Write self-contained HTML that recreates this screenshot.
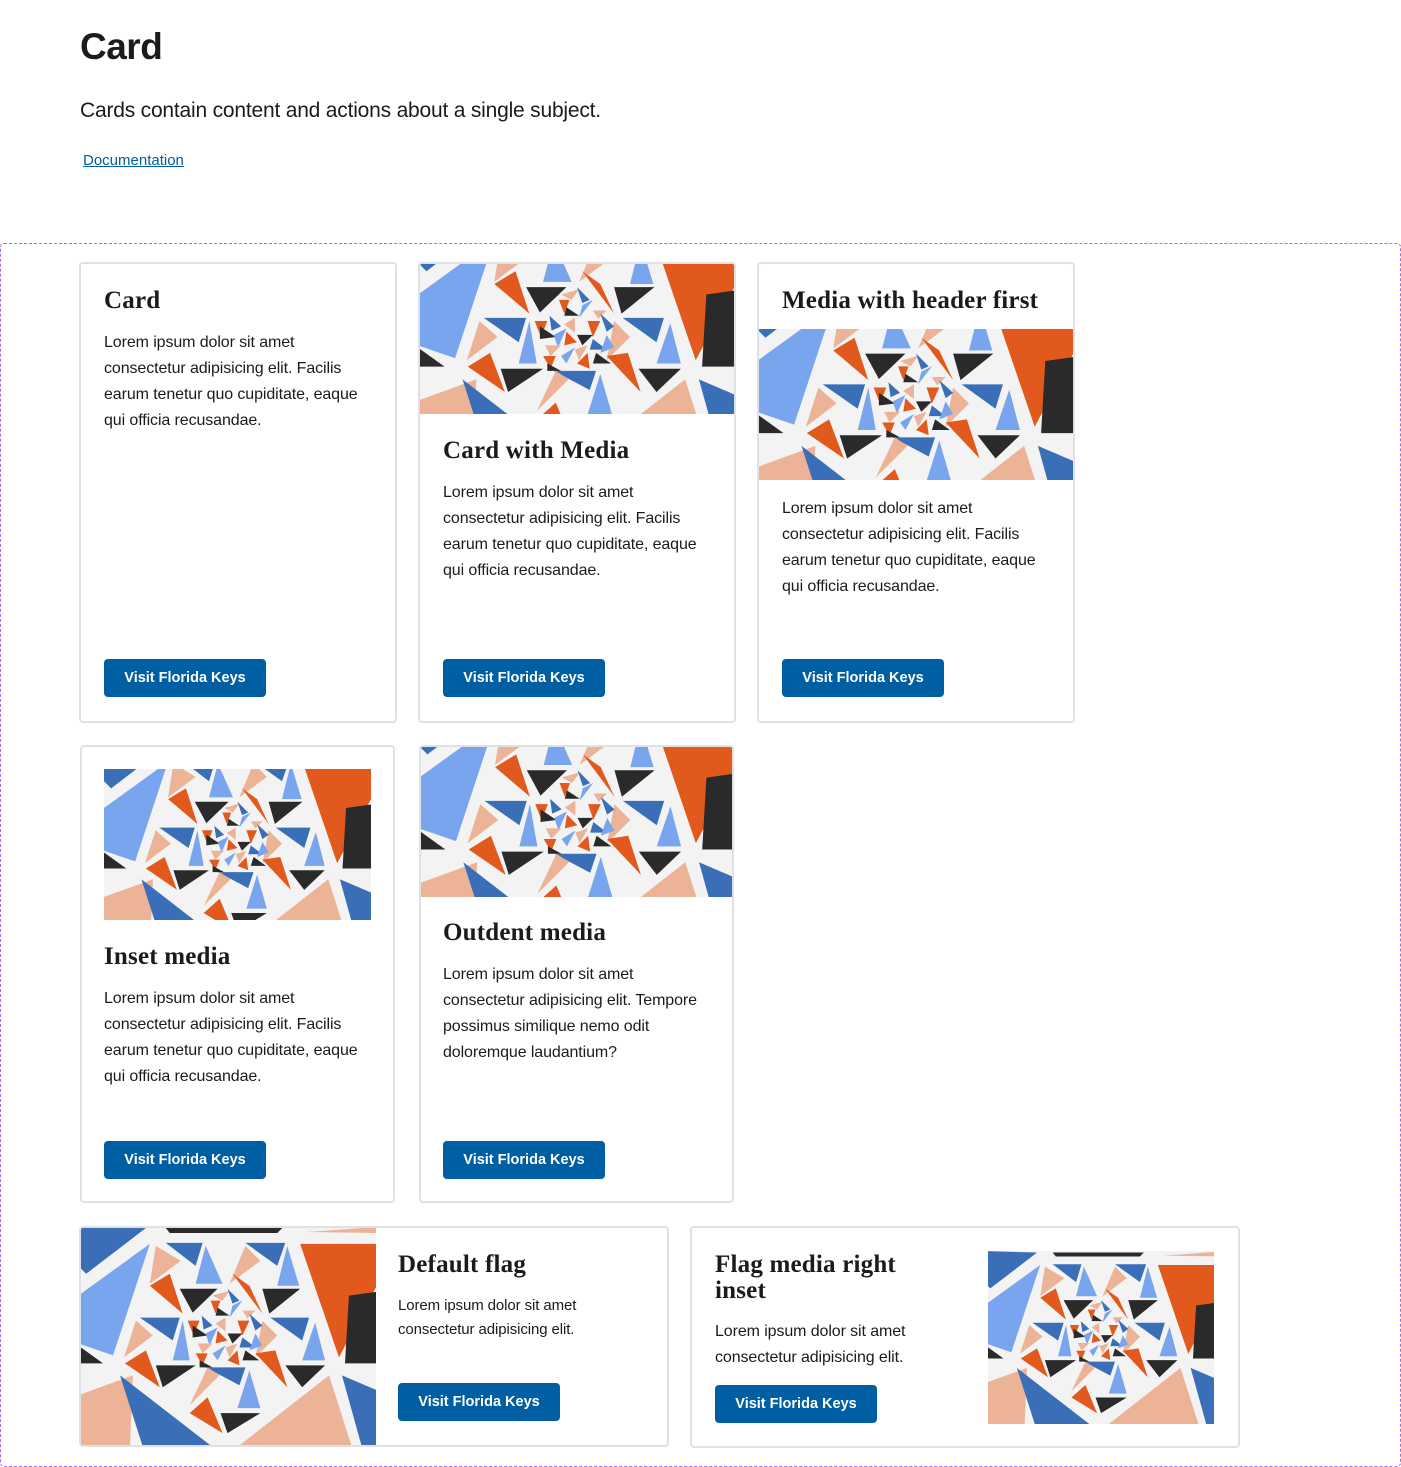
<!DOCTYPE html>
<html><head><meta charset="utf-8">
<style>
*{box-sizing:border-box;margin:0;padding:0}
body{width:1401px;height:1467px;background:#fff;font-family:"Liberation Sans",sans-serif;color:#1b1b1b;position:relative;overflow:hidden}
h1{position:absolute;left:80px;top:26px;font-size:37px;font-weight:bold;letter-spacing:-0.5px}
.lead{position:absolute;left:80px;top:99px;font-size:21px;letter-spacing:-0.2px}
.doc{position:absolute;left:83px;top:152px;font-size:15px;color:#005ea2;text-decoration:underline}
.frame{position:absolute;left:0;top:243px;width:1401px;height:1224px;border:1px dashed #a36cf0;border-radius:4px}
.card{position:absolute;border:2px solid #dfe1e2;border-radius:4px;background:#fff;overflow:hidden}
.t{position:absolute;font-family:"Liberation Serif",serif;font-weight:bold;font-size:25px;line-height:26px;color:#1b1b1b;letter-spacing:0.2px}
.p{position:absolute;font-size:16px;line-height:26px;color:#1b1b1b;white-space:nowrap;letter-spacing:-0.1px}
.btn{position:absolute;width:162px;height:38px;background:#005ea2;border-radius:4px;color:#fff;font-weight:bold;font-size:14.5px;line-height:38px;text-align:center}
svg.img{position:absolute;display:block}
</style></head><body>
<svg width="0" height="0" style="position:absolute">
<defs>
<symbol id="pat" viewBox="0 0 300 222" preserveAspectRatio="xMidYMid slice">
<rect width="300" height="222" fill="#f3f3f3"/>
<g>
<polygon fill="#3a6fb8" points="0,0 68,2 8,48 0,40"/>
<polygon fill="#2a2a2a" points="88,2 205,2 200,7 92,7"/>
<polygon fill="#ecb396" points="230,6 300,1 300,7"/>
<polygon fill="#79a4ee" points="0,70 72,18 35,130 0,118"/>
<polygon fill="#e2591d" points="223,18 300,18 300,60 262,132"/>
<polygon fill="#2a2a2a" points="272,70 300,66 300,138 268,138"/>
<polygon fill="#2a2a2a" points="0,120 25,138 0,138"/>
<polygon fill="#ecb396" points="0,170 55,150 52,222 0,222"/>
<polygon fill="#3a6fb8" points="42,150 135,222 65,222"/>
<polygon fill="#ecb396" points="252,150 160,222 275,222"/>
<polygon fill="#3a6fb8" points="265,150 300,165 300,222 285,222"/>
<polygon fill="#ecb396" points="78,20 103,35 72,58"/>
<polygon fill="#3a6fb8" points="88,17 125,17 118,40"/>
<polygon fill="#79a4ee" points="128,20 145,58 118,58"/>
<polygon fill="#ecb396" points="168,20 183,35 152,58"/>
<polygon fill="#3a6fb8" points="168,17 208,17 200,40"/>
<polygon fill="#79a4ee" points="210,20 222,60 200,60"/>
<polygon fill="#e2591d" points="72,60 92,48 105,88"/>
<polygon fill="#2a2a2a" points="102,63 140,63 115,87"/>
<polygon fill="#e2591d" points="155,48 172,60 185,88"/>
<polygon fill="#2a2a2a" points="185,63 223,63 192,88"/>
<polygon fill="#3a6fb8" points="62,92 102,92 95,115"/>
<polygon fill="#ecb396" points="58,95 75,110 46,132"/>
<polygon fill="#79a4ee" points="105,95 112,135 95,135"/>
<polygon fill="#3a6fb8" points="193,92 232,92 225,115"/>
<polygon fill="#ecb396" points="185,95 200,110 178,132"/>
<polygon fill="#79a4ee" points="238,97 248,135 225,135"/>
<polygon fill="#e2591d" points="47,138 68,125 82,162"/>
<polygon fill="#2a2a2a" points="78,140 118,140 85,162"/>
<polygon fill="#e2591d" points="178,128 198,125 210,162"/>
<polygon fill="#2a2a2a" points="208,140 248,140 225,162"/>
<polygon fill="#3a6fb8" points="128,142 168,142 162,160"/>
<polygon fill="#ecb396" points="130,142 142,150 112,180"/>
<polygon fill="#79a4ee" points="172,145 183,183 160,183"/>
<polygon fill="#e2591d" points="112,188 130,172 145,208"/>
<polygon fill="#2a2a2a" points="143,188 183,188 150,208"/>
<polygon fill="#ecb396" points="135,70 152,65 145,75"/>
<polygon fill="#e2591d" points="133,75 143,75 138,88"/>
<polygon fill="#3a6fb8" points="150,63 162,75 155,78"/>
<polygon fill="#2a2a2a" points="140,82 152,90 138,90"/>
<polygon fill="#79a4ee" points="155,80 165,75 152,92"/>
<polygon fill="#ecb396" points="165,85 178,85 170,93"/>
<polygon fill="#e2591d" points="160,95 172,95 165,110"/>
<polygon fill="#3a6fb8" points="172,88 185,100 178,105"/>
<polygon fill="#e2591d" points="110,95 122,95 116,110"/>
<polygon fill="#3a6fb8" points="124,90 135,100 126,104"/>
<polygon fill="#2a2a2a" points="115,100 130,110 115,112"/>
<polygon fill="#ecb396" points="138,98 148,92 148,106"/>
<polygon fill="#79a4ee" points="128,108 140,102 132,120"/>
<polygon fill="#e2591d" points="140,105 150,115 138,118"/>
<polygon fill="#2a2a2a" points="150,108 165,108 155,118"/>
<polygon fill="#3a6fb8" points="165,112 178,122 162,122"/>
<polygon fill="#79a4ee" points="178,108 185,120 172,125"/>
<polygon fill="#2a2a2a" points="168,125 182,135 165,135"/>
<polygon fill="#ecb396" points="120,118 135,118 125,128"/>
<polygon fill="#e2591d" points="118,128 130,128 125,140"/>
<polygon fill="#79a4ee" points="135,128 148,120 140,135"/>
<polygon fill="#ecb396" points="148,122 160,118 152,132"/>
<polygon fill="#e2591d" points="150,135 160,125 162,140"/>
<polygon fill="#2a2a2a" points="122,135 135,142 122,142"/>
</g>
</symbol>
</defs>
</svg>

<h1>Card</h1>
<div class="lead">Cards contain content and actions about a single subject.</div>
<div class="doc">Documentation</div>
<div class="frame"></div>

<div class="card" style="left:79px;top:262px;width:318px;height:461px">
  <div class="t" style="left:23px;top:24px">Card</div>
  <div class="p" style="left:23px;top:66px">Lorem ipsum dolor sit amet<br>consectetur adipisicing elit. Facilis<br>earum tenetur quo cupiditate, eaque<br>qui officia recusandae.</div>
  <div class="btn" style="left:23px;top:395px">Visit Florida Keys</div>
</div>
<div class="card" style="left:418px;top:262px;width:318px;height:461px">
  <svg class="img" style="left:-2px;top:-2px" width="318" height="152"><use href="#pat" width="318" height="152"/></svg>
  <div class="t" style="left:23px;top:174px">Card with Media</div>
  <div class="p" style="left:23px;top:216px">Lorem ipsum dolor sit amet<br>consectetur adipisicing elit. Facilis<br>earum tenetur quo cupiditate, eaque<br>qui officia recusandae.</div>
  <div class="btn" style="left:23px;top:395px">Visit Florida Keys</div>
</div>
<div class="card" style="left:757px;top:262px;width:318px;height:461px">
  <div class="t" style="left:23px;top:24px">Media with header first</div>
  <svg class="img" style="left:-2px;top:65px" width="318" height="151"><use href="#pat" width="318" height="151"/></svg>
  <div class="p" style="left:23px;top:232px">Lorem ipsum dolor sit amet<br>consectetur adipisicing elit. Facilis<br>earum tenetur quo cupiditate, eaque<br>qui officia recusandae.</div>
  <div class="btn" style="left:23px;top:395px">Visit Florida Keys</div>
</div>

<div class="card" style="left:80px;top:745px;width:315px;height:458px">
  <svg class="img" style="left:22px;top:22px" width="267" height="151"><use href="#pat" width="267" height="151"/></svg>
  <div class="t" style="left:22px;top:197px">Inset media</div>
  <div class="p" style="left:22px;top:239px">Lorem ipsum dolor sit amet<br>consectetur adipisicing elit. Facilis<br>earum tenetur quo cupiditate, eaque<br>qui officia recusandae.</div>
  <div class="btn" style="left:22px;top:394px">Visit Florida Keys</div>
</div>
<div class="card" style="left:419px;top:745px;width:315px;height:458px">
  <svg class="img" style="left:-2px;top:-2px" width="317" height="152"><use href="#pat" width="317" height="152"/></svg>
  <div class="t" style="left:22px;top:173px">Outdent media</div>
  <div class="p" style="left:22px;top:215px">Lorem ipsum dolor sit amet<br>consectetur adipisicing elit. Tempore<br>possimus similique nemo odit<br>doloremque laudantium?</div>
  <div class="btn" style="left:22px;top:394px">Visit Florida Keys</div>
</div>

<div class="card" style="left:79px;top:1226px;width:590px;height:221px">
  <svg class="img" style="left:-2px;top:-2px" width="297" height="221"><use href="#pat" width="297" height="221"/></svg>
  <div class="t" style="left:317px;top:24px">Default flag</div>
  <div class="p" style="left:317px;top:66px;font-size:15px;line-height:24px">Lorem ipsum dolor sit amet<br>consectetur adipisicing elit.</div>
  <div class="btn" style="left:317px;top:155px">Visit Florida Keys</div>
</div>
<div class="card" style="left:690px;top:1226px;width:550px;height:222px">
  <div class="t" style="left:23px;top:24px">Flag media right<br>inset</div>
  <div class="p" style="left:23px;top:91px">Lorem ipsum dolor sit amet<br>consectetur adipisicing elit.</div>
  <div class="btn" style="left:23px;top:157px">Visit Florida Keys</div>
  <svg class="img" style="left:296px;top:23px" width="226" height="173"><use href="#pat" width="226" height="173"/></svg>
</div>
</body></html>
